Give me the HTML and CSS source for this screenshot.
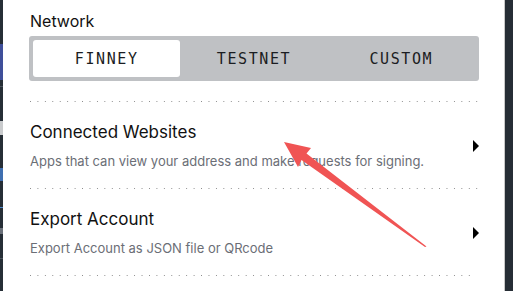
FILE: index.html
```html
<!DOCTYPE html>
<html lang="en">
<head>
  <meta charset="UTF-8">
  <title>Settings</title>
  <link rel="stylesheet" href="styles.css">
</head>
<body>
  <div class="edge-left"></div>
  <div class="settings">
    <section class="network">
      <h2>Network</h2>
      <div class="segments">
        <button class="segment active">FINNEY</button>
        <button class="segment">TESTNET</button>
        <button class="segment">CUSTOM</button>
      </div>
    </section>
    <div class="row">
      <div class="row-text">
        <h3>Connected Websites</h3>
        <p>Apps that can view your address and make requests for signing.</p>
      </div>
      <span class="caret"></span>
    </div>
    <div class="row">
      <div class="row-text">
        <h3>Export Account</h3>
        <p>Export Account as JSON file or QRcode</p>
      </div>
      <span class="caret"></span>
    </div>
  </div>
  <div class="edge-right"></div>

  <svg class="annotation" width="513" height="291" viewBox="0 0 513 291">
    <polygon points="284,142 311,148 306.5,153.5 426.5,246.5 425,247 301.5,160 298,167" fill="#f05454"/>
  </svg>
</body>
</html>
```

FILE: styles.css
```css
html {
  background: #fff;
}
body {
  margin: 0;
  height: 291px;
  display: flex;
  overflow: hidden;
  font-family: Inter, "Noto Sans", sans-serif;
}
.edge-left {
  width: 3px;
  flex: none;
  background:
    linear-gradient(#262e36 0 44px, #3f4f9a 44px 80px, #262e36 80px 86px, #4b535c 86px 87px,
      #262e36 87px 121px, #c9cbcd 121px 135px, #262e36 135px 168px, #3f6fb0 168px 181px,
      #262e36 181px 207px, #4a86c8 207px 208px, #262e36 208px 228px, #6a7079 228px 234px,
      #262e36 234px 258px, #4b535c 258px 259px, #262e36 259px);
}
.edge-right {
  width: 8px;
  flex: none;
  background: #262d35;
  border-left: 1px solid #c8c8c8;
}
.settings {
  flex: 1;
  padding: 0 25px 0 26px;
}
.network h2 {
  margin: 11px 0 5px 1px;
  font-size: 16px;
  line-height: 20px;
  font-weight: 400;
  color: #111;
}
.segments {
  display: flex;
  padding: 4px;
  height: 37px;
  background: #bfc1c4;
  border-radius: 3px;
}
.segment {
  flex: 1;
  border: 0;
  border-radius: 3px;
  background: transparent;
  font-family: "DejaVu Sans Mono", monospace;
  font-size: 15px;
  letter-spacing: 1.6px;
  color: #1b1d22;
  padding: 0;
}
.segment.active {
  background: #fff;
}
.row {
  display: flex;
  align-items: center;
  margin-top: 20px;
  padding: 20px 0 18px;
  background: linear-gradient(to right, #8a8a8a 1px, transparent 1px) 1px 0 / 7.45px 1px no-repeat;
  background-size: 7.45px 1px;
  background-repeat: repeat-x;
}
.network + .row {
  margin-top: 20px;
}
.row + .row {
  margin-top: 0;
}
.row-text {
  flex: 1;
  padding-left: 1px;
}
.row h3 {
  margin: 0 0 9px;
  font-size: 17px;
  line-height: 22px;
  font-weight: 400;
  color: #111;
}
.row p {
  margin: 0;
  font-size: 13px;
  line-height: 18px;
  color: #6b6e76;
}
.caret {
  width: 0;
  height: 0;
  border-left: 6px solid #000;
  border-top: 6px solid transparent;
  border-bottom: 6px solid transparent;
}
.settings::after {
  content: "";
  display: block;
  width: 445px;
  height: 1px;
  background: linear-gradient(to right, #8a8a8a 1px, transparent 1px) 1px 0 / 7.45px 1px repeat-x;
}
.annotation {
  position: absolute;
  left: 0;
  top: 0;
  pointer-events: none;
}
```
